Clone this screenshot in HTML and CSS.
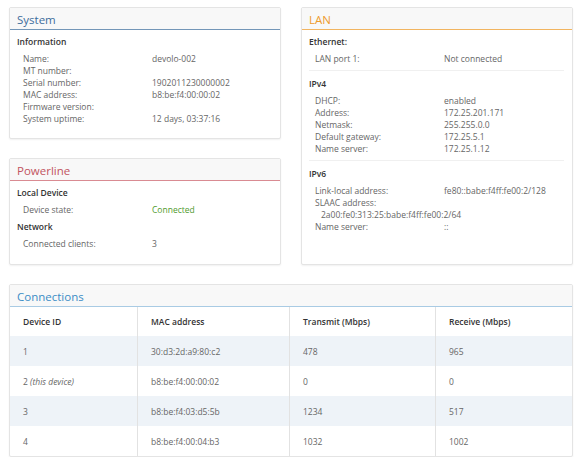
FILE: index.html
```html
<!DOCTYPE html>
<html lang="en">
<head>
    <meta charset="UTF-8">
    <title>devolo - Overview</title>
    <link rel="stylesheet" href="styles.css">
</head>
<body>

<div class="page">
    <div class="columns">
        <div class="column">
            <!-- System -->
            <div class="panel panel-system">
                <div class="panel-header">System</div>
                <div class="panel-body">
                    <div class="section">
                        <div class="section-title">Information</div>
                        <div class="rows">
                            <span class="label">Name:</span><span class="value">devolo-002</span>
                            <span class="label">MT number:</span><span class="value"></span>
                            <span class="label">Serial number:</span><span class="value">1902011230000002</span>
                            <span class="label">MAC address:</span><span class="value">b8:be:f4:00:00:02</span>
                            <span class="label">Firmware version:</span><span class="value"></span>
                            <span class="label">System uptime:</span><span class="value">12 days, 03:37:16</span>
                        </div>
                    </div>
                </div>
            </div>

            <!-- Powerline -->
            <div class="panel panel-powerline">
                <div class="panel-header">Powerline</div>
                <div class="panel-body">
                    <div class="section">
                        <div class="section-title">Local Device</div>
                        <div class="rows">
                            <span class="label">Device state:</span><span class="value ok">Connected</span>
                        </div>
                    </div>
                    <div class="section">
                        <div class="section-title">Network</div>
                        <div class="rows">
                            <span class="label">Connected clients:</span><span class="value">3</span>
                        </div>
                    </div>
                </div>
            </div>
        </div>

        <!-- LAN -->
        <div class="panel panel-lan">
            <div class="panel-header">LAN</div>
            <div class="panel-body">
                <div class="section">
                    <div class="section-title">Ethernet:</div>
                    <div class="rows">
                        <span class="label">LAN port 1:</span><span class="value">Not connected</span>
                    </div>
                </div>
                <div class="section divided">
                    <div class="section-title">IPv4</div>
                    <div class="rows">
                        <span class="label">DHCP:</span><span class="value">enabled</span>
                        <span class="label">Address:</span><span class="value">172.25.201.171</span>
                        <span class="label">Netmask:</span><span class="value">255.255.0.0</span>
                        <span class="label">Default gateway:</span><span class="value">172.25.5.1</span>
                        <span class="label">Name server:</span><span class="value">172.25.1.12</span>
                    </div>
                </div>
                <div class="section divided">
                    <div class="section-title">IPv6</div>
                    <div class="rows">
                        <span class="label">Link-local address:</span><span class="value">fe80::babe:f4ff:fe00:2/128</span>
                        <span class="label">SLAAC address:</span><span class="value"></span>
                        <span class="value wide">2a00:fe0:313:25:babe:f4ff:fe00:2/64</span>
                        <span class="label">Name server:</span><span class="value">::</span>
                    </div>
                </div>
            </div>
        </div>
    </div>

    <!-- Connections -->
    <div class="panel panel-connections">
        <div class="panel-header">Connections</div>
        <table class="conn-table">
            <thead>
                <tr>
                    <th class="col-id">Device ID</th>
                    <th class="col-mac">MAC address</th>
                    <th class="col-tx">Transmit (Mbps)</th>
                    <th>Receive (Mbps)</th>
                </tr>
            </thead>
            <tbody>
                <tr><td>1</td><td>30:d3:2d:a9:80:c2</td><td>478</td><td>965</td></tr>
                <tr><td>2 <em>(this device)</em></td><td>b8:be:f4:00:00:02</td><td>0</td><td>0</td></tr>
                <tr><td>3</td><td>b8:be:f4:03:d5:5b</td><td>1234</td><td>517</td></tr>
                <tr><td>4</td><td>b8:be:f4:00:04:b3</td><td>1032</td><td>1002</td></tr>
            </tbody>
        </table>
    </div>
</div>

</body>
</html>
```

FILE: styles.css
```css
body {
    font-family: "Open Sans", "DejaVu Sans", sans-serif;
    font-size: 8.5px;
    color: #666;
    margin: 0;
    padding: 0;
    background-color: #fff;
}
.page {
    width: 564px;
    padding: 7px 0 0 9px;
}
.columns {
    display: grid;
    grid-template-columns: 272px 272px;
    column-gap: 20px;
    margin-bottom: 19px;
}
.column {
    display: flex;
    flex-direction: column;
    gap: 19px;
}
.panel {
    background-color: #fff;
    border: 1px solid #e4e4e4;
    border-radius: 2px;
    box-shadow: 0 1px 2px rgba(0, 0, 0, 0.06);
}
.panel-header {
    background-color: #f8f8f8;
    height: 21px;
    line-height: 23px;
    padding-left: 7px;
    font-size: 11.5px;
    border-bottom: 1px solid #ccc;
}
.panel-system .panel-header {
    color: #3d6d9c;
    border-bottom-color: #7396b8;
}
.panel-powerline .panel-header {
    color: #c2545f;
    border-bottom-color: #d98b92;
}
.panel-lan .panel-header {
    color: #ee9b2d;
    border-bottom-color: #f2b560;
}
.panel-connections .panel-header {
    color: #3b8dc6;
    border-bottom-color: #a9cbe4;
}
.panel-body {
    padding: 5px 8px 13px 7px;
}
.panel-powerline .panel-body {
    padding-bottom: 14px;
}
.section-title {
    color: #333;
    font-weight: 600;
    line-height: 12px;
    margin-top: 1px;
    margin-bottom: 5px;
}
.section + .section {
    margin-top: 5px;
}
.section.divided {
    margin-top: 5px;
    padding-top: 6px;
    border-top: 1px solid #f0f0f0;
}
.rows {
    display: grid;
    grid-template-columns: 129px 1fr;
    line-height: 12px;
    padding-left: 6px;
}
.rows .wide {
    grid-column: 1 / 3;
    padding-left: 6px;
}
.value.ok {
    color: #4f9a2e;
}
.conn-table {
    width: 100%;
    border-collapse: collapse;
}
.conn-table th,
.conn-table td {
    height: 30px;
    padding: 0 0 0 13px;
    text-align: left;
    border-left: 1px solid #e2e2e2;
}
.conn-table th:first-child,
.conn-table td:first-child {
    border-left: none;
}
.conn-table th {
    color: #333;
    font-weight: 600;
    height: 29px;
}
.conn-table .col-id {
    width: 114px;
}
.conn-table .col-mac {
    width: 138px;
}
.conn-table .col-tx {
    width: 132px;
}
.conn-table tbody tr:nth-child(odd) {
    background-color: #eef3f8;
}
.conn-table em {
    font-style: italic;
}
```
